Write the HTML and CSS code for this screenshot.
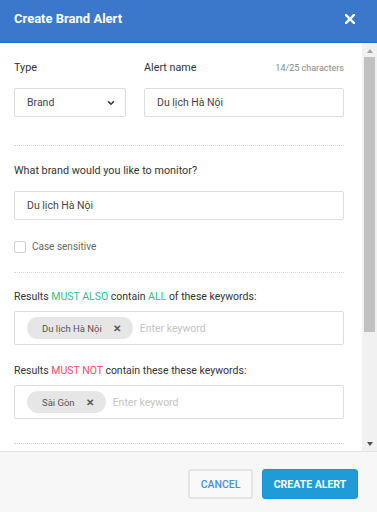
FILE: index.html
```html
<!DOCTYPE html>
<html lang="vi">
<head>
<meta charset="utf-8">
<title>Create Brand Alert</title>
<link rel="stylesheet" href="styles.css">
</head>
<body>
<div class="modal">
  <header class="modal-header">
    <h1 class="modal-title">Create Brand Alert</h1>
    <button class="close-btn" aria-label="Close">
      <svg width="10" height="10" viewBox="0 0 10 10"><path d="M1 1L9 9M9 1L1 9" stroke="#fff" stroke-width="2.4" stroke-linecap="square"/></svg>
    </button>
  </header>
  <div class="modal-main">
    <div class="modal-body">
      <div class="row-two">
        <div class="field-col">
          <div class="label-row"><span class="label">Type</span></div>
          <div class="select">
            <span>Brand</span>
            <svg width="8" height="6" viewBox="0 0 8 6"><path d="M1 1.2L4 4.2L7 1.2" fill="none" stroke="#333" stroke-width="1.6"/></svg>
          </div>
        </div>
        <div class="field-col">
          <div class="label-row"><span class="label">Alert name</span><span class="counter">14/25 characters</span></div>
          <div class="input">Du lịch Hà Nội</div>
        </div>
      </div>
      <hr class="divider">
      <div class="label">What brand would you like to monitor?</div>
      <div class="input full">Du lịch Hà Nội</div>
      <label class="check-row"><span class="checkbox"></span><span class="check-text">Case sensitive</span></label>
      <hr class="divider div-2">
      <div class="label kw-label">Results <span class="green">MUST ALSO</span> contain <span class="green">ALL</span> of these keywords:</div>
      <div class="tag-box">
        <span class="tag">Du lịch Hà Nội <span class="tag-x">✕</span></span>
        <span class="placeholder">Enter keyword</span>
      </div>
      <div class="label kw-label second">Results <span class="red">MUST NOT</span> contain these these keywords:</div>
      <div class="tag-box">
        <span class="tag">Sài Gòn <span class="tag-x">✕</span></span>
        <span class="placeholder">Enter keyword</span>
      </div>
      <hr class="divider div-3">
    </div>
    <div class="scrollbar" aria-hidden="true">
      <span class="sb-btn sb-up"><span class="arrow-up"></span></span>
      <span class="sb-thumb"></span>
      <span class="sb-rest"></span>
      <span class="sb-btn sb-down"><span class="arrow-down"></span></span>
    </div>
  </div>
  <footer class="modal-footer">
    <button class="btn btn-cancel">CANCEL</button>
    <button class="btn btn-primary">CREATE ALERT</button>
  </footer>
</div>
</body>
</html>
```

FILE: styles.css
```css
html, body {
  margin: 0;
  padding: 0;
  height: 100%;
}
body {
  font-family: Roboto, "Noto Sans", "Liberation Sans", sans-serif;
  color: #333;
  background: #fff;
}
.modal {
  display: flex;
  flex-direction: column;
  height: 512px;
}
.modal-header {
  flex: 0 0 auto;
  height: 43px;
  box-sizing: border-box;
  background: #3b78cb;
  border-bottom: 1px solid #1c6cd3;
  display: flex;
  align-items: flex-start;
  justify-content: space-between;
  padding: 11px 22px 0 14px;
}
.modal-title {
  margin: 0;
  font-size: 13px;
  line-height: 16px;
  font-weight: 700;
  color: #fff;
}
.close-btn {
  border: 0;
  background: none;
  padding: 0;
  margin-top: 3px;
  width: 10px;
  height: 10px;
  display: block;
}
.close-btn svg { display: block; }
.modal-main {
  flex: 1 1 auto;
  display: flex;
  min-height: 0;
}
.modal-body {
  flex: 1 1 auto;
  overflow: hidden;
  padding: 18px 18px 0 14px;
}
.scrollbar {
  flex: 0 0 15px;
  display: flex;
  flex-direction: column;
  background: #f1f1f1;
}
.sb-btn {
  flex: 0 0 14px;
  display: flex;
  justify-content: center;
}
.sb-up { align-items: flex-start; padding-top: 6px; box-sizing: border-box; }
.sb-down { align-items: flex-start; padding-top: 5px; box-sizing: border-box; }
.arrow-up {
  width: 0;
  height: 0;
  border-left: 3.5px solid transparent;
  border-right: 3.5px solid transparent;
  border-bottom: 4px solid #a3a3a3;
}
.arrow-down {
  width: 0;
  height: 0;
  border-left: 3.5px solid transparent;
  border-right: 3.5px solid transparent;
  border-top: 4px solid #505050;
}
.sb-thumb {
  flex: 0 0 275px;
  margin: 0 2px;
  background: #c1c1c1;
}
.sb-rest { flex: 1 1 auto; }
.row-two {
  display: grid;
  grid-template-columns: 112px 200px;
  column-gap: 18px;
}
.label-row {
  display: flex;
  justify-content: space-between;
  align-items: baseline;
  margin-bottom: 13px;
}
.label {
  font-size: 10.8px;
  line-height: 14px;
  color: #333;
}
.counter {
  font-size: 9px;
  line-height: 14px;
  color: #888;
}
.select, .input {
  height: 29px;
  box-sizing: border-box;
  border: 1px solid #ddd;
  border-radius: 2px;
  padding: 0 12px;
  font-size: 10.5px;
  color: #444;
  display: flex;
  align-items: center;
}
.select {
  justify-content: space-between;
  padding-right: 10px;
}
.select svg { display: block; }
.input.full { margin-top: 13px; }
.divider {
  border: 0;
  border-top: 1px dotted #d6d6d6;
  margin: 28px 0 18px;
  height: 0;
}
.check-row {
  display: flex;
  align-items: center;
  gap: 6px;
  margin-top: 20px;
  height: 13px;
}
.checkbox {
  width: 12px;
  height: 12px;
  box-sizing: border-box;
  border: 1px solid #d0d0d0;
  border-radius: 2px;
  background: #fff;
}
.check-text {
  font-size: 10px;
  color: #666;
}
.divider.div-2 { margin: 19px 0 17px; }
.divider.div-3 { margin: 24px 0 0; }
.kw-label { margin-bottom: 7px; font-size: 10.5px; }
.kw-label.second { margin-top: 19px; }
.green { color: #2fbf8c; }
.red { color: #f34b6a; }
.tag-box {
  height: 34px;
  box-sizing: border-box;
  border: 1px solid #ddd;
  border-radius: 2px;
  display: flex;
  align-items: center;
  padding: 0 12px;
  gap: 7px;
}
.tag {
  height: 22px;
  box-sizing: border-box;
  border-radius: 11px;
  background: #e6e6e6;
  display: inline-flex;
  align-items: center;
  padding: 1px 12px 0 15px;
  font-size: 9.5px;
  color: #555;
}
.tag-x {
  margin-left: 11px;
  font-size: 10px;
  font-weight: 700;
  color: #555;
}
.placeholder {
  font-size: 10.5px;
  color: #c4c4c4;
}
.modal-footer {
  flex: 0 0 auto;
  height: 61px;
  box-sizing: border-box;
  background: #f7f7f7;
  border-top: 1px solid #e2e2e2;
  display: flex;
  justify-content: flex-end;
  align-items: flex-start;
  gap: 9px;
  padding: 17px 19px 0 0;
}
.btn {
  height: 30px;
  box-sizing: border-box;
  border-radius: 3px;
  font-family: Roboto, "Noto Sans", sans-serif;
  font-size: 10.5px;
  font-weight: 500;
  padding: 0;
}
.btn-cancel {
  width: 65px;
  background: #f9f9f9;
  border: 2px solid #e4e4e4;
  color: #4a8fd8;
}
.btn-primary {
  width: 96px;
  background: #209bd9;
  border: 1px solid #1b93d0;
  color: #fff;
  font-weight: 700;
}
```
